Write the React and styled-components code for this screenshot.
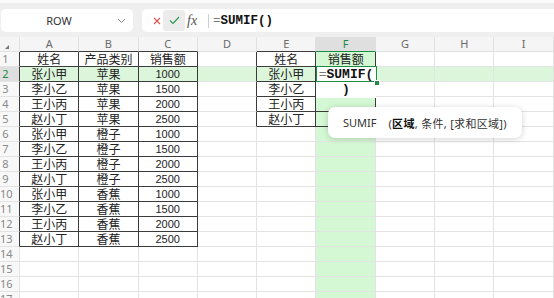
import React from 'react';
import styled, { createGlobalStyle } from 'styled-components';

const GlobalStyle = createGlobalStyle`
  html, body {
    margin: 0;
    padding: 0;
    background: #fff;
  }
  body {
    width: 554px;
    height: 298px;
    overflow: hidden;
    font-family: 'Noto Sans', 'Noto Sans CJK SC', sans-serif;
  }
`;

const COLS = ['A', 'B', 'C', 'D', 'E', 'F', 'G', 'H', 'I'];
const ROW_COUNT = 17;
const ACTIVE_COL = 6;
const ACTIVE_ROW = 2;

const names = ['张小甲', '李小乙', '王小丙', '赵小丁'];
const fruits = ['苹果', '橙子', '香蕉'];
const amounts = [1000, 1500, 2000, 2500];

const data = { '1-1': '姓名', '1-2': '产品类别', '1-3': '销售额', '1-5': '姓名', '1-6': '销售额' };
for (let r = 2; r <= 13; r++) {
  data[`${r}-1`] = names[(r - 2) % 4];
  data[`${r}-2`] = fruits[Math.floor((r - 2) / 4)];
  data[`${r}-3`] = String(amounts[(r - 2) % 4]);
}
for (let r = 2; r <= 5; r++) data[`${r}-5`] = names[r - 2];

const boxes = [
  { r1: 1, r2: 13, c1: 1, c2: 3 },
  { r1: 1, r2: 5, c1: 5, c2: 6 },
];
const inBox = (r, c) => boxes.some((b) => r >= b.r1 && r <= b.r2 && c >= b.c1 && c <= b.c2);

const Toolbar = styled.div`
  height: 37px;
  box-sizing: border-box;
  background: #efefef;
  border-top: 3px solid #fafafa;
  padding: 6px 0 0 1px;
  display: flex;
  align-items: flex-start;
  gap: 9px;
`;

const NameBox = styled.div`
  width: 132px;
  height: 23px;
  background: #fff;
  border-radius: 5px;
  display: flex;
  align-items: center;
`;

const NameText = styled.span`
  flex: 1;
  text-align: center;
  font-size: 11px;
  color: #333;
`;

const Chevron = styled.svg`
  width: 9px;
  height: 6px;
  margin-right: 7px;
`;

const FormulaBox = styled.div`
  flex: 1;
  height: 23px;
  background: #fff;
  border-radius: 5px 0 0 5px;
  display: flex;
  align-items: center;
  padding-left: 9px;
`;

const IconBtn = styled.div`
  width: ${(p) => p.$w}px;
  height: 21px;
  display: flex;
  align-items: center;
  justify-content: center;
  background: ${(p) => (p.$hover ? '#ececec' : 'transparent')};
  border-radius: 3px;
`;

const Fx = styled.span`
  font-family: 'Liberation Serif', serif;
  font-style: italic;
  font-size: 14px;
  color: #555;
  margin-left: 2px;
  width: 12px;
`;

const Divider = styled.div`
  width: 1px;
  height: 14px;
  background: #d0d0d0;
  margin: 0 4px 0 9px;
`;

const FormulaText = styled.span`
  font-family: 'Liberation Mono', monospace;
  font-size: 12.5px;
  font-weight: bold;
  color: #111;
`;

const Eq = styled.span`
  font-weight: normal;
  color: #777;
`;

const Sheet = styled.div`
  position: relative;
  display: grid;
  grid-template-columns: 20px repeat(9, 59.3px);
  grid-auto-rows: 15px;
`;

const Corner = styled.div`
  background: #f5f5f5;
  border-right: 1px solid #e0e0e0;
  border-bottom: 1px solid #e0e0e0;
  box-sizing: border-box;
  position: relative;
`;

const CornerMark = styled.svg`
  position: absolute;
  left: 5px;
  top: 8px;
`;

const ColHead = styled.div`
  box-sizing: border-box;
  background: ${(p) => (p.$active ? '#dfdfdf' : '#f5f5f5')};
  color: ${(p) => (p.$active ? '#1e8a43' : '#6a6a6a')};
  border-right: 1px solid #e0e0e0;
  border-bottom: 1px solid ${(p) => p.$bottom};
  font-size: 11px;
  line-height: 14px;
  text-align: center;
`;

const RowHead = styled.div`
  box-sizing: border-box;
  background: ${(p) => (p.$active ? '#dfdfdf' : '#f8f8f8')};
  color: ${(p) => (p.$active ? '#1e8a43' : '#8a8a8a')};
  border-right: 1px solid ${(p) => p.$right};
  border-bottom: 1px solid #e3e3e3;
  font-size: 11px;
  line-height: 14px;
  text-align: center;
  padding-right: 8px;
`;

const Cell = styled.div`
  box-sizing: border-box;
  background: ${(p) => p.$bg};
  border-right: 1px solid ${(p) => p.$right};
  border-bottom: 1px solid ${(p) => p.$bottom};
  color: #222;
  font-family: ${(p) => (p.$num ? "'Liberation Sans', sans-serif" : "'Noto Sans CJK SC', sans-serif")};
  font-size: ${(p) => (p.$num ? 11 : 12)}px;
  line-height: 14px;
  text-align: center;
  white-space: nowrap;
`;

const Editor = styled.div`
  position: absolute;
  left: 316px;
  top: 29px;
  width: 60px;
  height: 32px;
  background: #fff;
  font-family: 'Liberation Mono', monospace;
  font-size: 13px;
  font-weight: bold;
  line-height: 15px;
  text-align: center;
  color: #111;
  padding-top: 1px;
  box-sizing: border-box;
`;

const ActiveFrame = styled.div`
  position: absolute;
  left: 315.5px;
  top: 29px;
  width: 61px;
  height: 16px;
  border: 1.5px solid #1f8c46;
  box-sizing: border-box;
`;

const FillHandle = styled.div`
  position: absolute;
  left: 374px;
  top: 43px;
  width: 4px;
  height: 4px;
  background: #1f8c46;
  border: 1px solid #fff;
`;

const Tooltip = styled.div`
  position: absolute;
  left: 328px;
  top: 70px;
  width: 194px;
  height: 31px;
  box-sizing: border-box;
  background: #fff;
  border-radius: 7px;
  box-shadow: 0 1px 6px rgba(0, 0, 0, 0.18);
  display: flex;
  align-items: center;
  padding-left: 15px;
  font-size: 11px;
  color: #333;
  white-space: nowrap;
`;

const FnName = styled.span`
  margin-right: 12px;
`;

const Args = styled.span`
  letter-spacing: 0.3px;
`;

const Arg = styled.span`
  font-weight: ${(p) => (p.$current ? 'bold' : 'normal')};
  color: ${(p) => (p.$current ? '#111' : '#333')};
`;

const LIGHT = '#e3e3e3';
const DARK = '#3b3b3b';

function cellBg(r, c) {
  if (c === ACTIVE_COL) return '#d3f8d3';
  if (r === ACTIVE_ROW) return '#dcf6dc';
  return '#fff';
}

function App() {
  const rows = [];
  for (let r = 1; r <= ROW_COUNT; r++) {
    rows.push(
      <RowHead key={`h${r}`} $active={r === ACTIVE_ROW} $right={inBox(r, 1) ? DARK : LIGHT}>
        {r}
      </RowHead>
    );
    for (let c = 1; c <= COLS.length; c++) {
      const v = data[`${r}-${c}`];
      rows.push(
        <Cell
          key={`${r}-${c}`}
          $bg={cellBg(r, c)}
          $right={inBox(r, c) || inBox(r, c + 1) ? DARK : LIGHT}
          $bottom={inBox(r, c) || inBox(r + 1, c) ? DARK : LIGHT}
          $num={v && /^\d+$/.test(v)}
        >
          {v}
        </Cell>
      );
    }
  }

  return (
    <>
      <GlobalStyle />
      <Toolbar>
        <NameBox>
          <NameText>ROW</NameText>
          <Chevron viewBox="0 0 9 6">
            <path d="M1 1l3.5 3.5L8 1" fill="none" stroke="#888" strokeWidth="1" />
          </Chevron>
        </NameBox>
        <FormulaBox>
          <IconBtn $w={12}>
            <svg width="8" height="8" viewBox="0 0 8 8">
              <path d="M1 1l6 6M7 1l-6 6" stroke="#d9534f" strokeWidth="1.1" />
            </svg>
          </IconBtn>
          <IconBtn $w={22} $hover>
            <svg width="11" height="9" viewBox="0 0 11 9">
              <path d="M1 4.5l3 3L10 1" fill="none" stroke="#2e9b56" strokeWidth="1.2" />
            </svg>
          </IconBtn>
          <Fx>fx</Fx>
          <Divider />
          <FormulaText>
            <Eq>=</Eq>SUMIF()
          </FormulaText>
        </FormulaBox>
      </Toolbar>
      <Sheet>
        <Corner>
          <CornerMark width="4" height="4" viewBox="0 0 4 4">
            <path d="M4 0V4H0z" fill="#777" />
          </CornerMark>
        </Corner>
        {COLS.map((l, i) => (
          <ColHead
            key={l}
            $active={i + 1 === ACTIVE_COL}
            $bottom={i + 1 === ACTIVE_COL ? '#1f8c46' : inBox(1, i + 1) ? DARK : '#e0e0e0'}
          >
            {l}
          </ColHead>
        ))}
        {rows}
        <Editor>
          <div>
            <Eq>=</Eq>SUMIF(
          </div>
          <div>)</div>
        </Editor>
        <ActiveFrame />
        <FillHandle />
        <Tooltip>
          <FnName>SUMIF</FnName>
          <Args>
            (<Arg $current>区域</Arg>, <Arg>条件</Arg>, <Arg>[求和区域]</Arg>)
          </Args>
        </Tooltip>
      </Sheet>
    </>
  );
}

export default App;
